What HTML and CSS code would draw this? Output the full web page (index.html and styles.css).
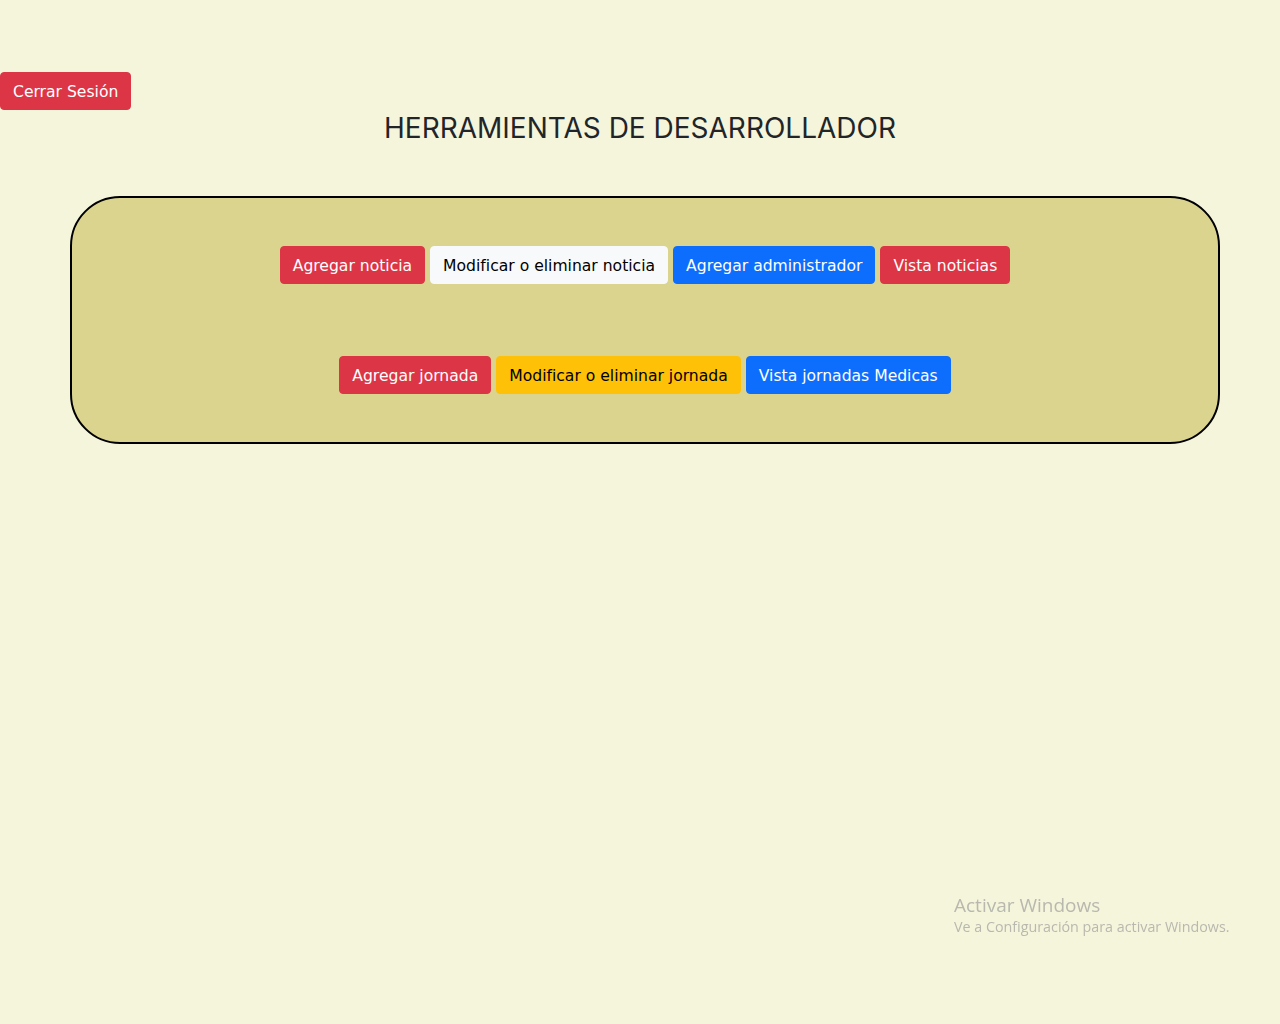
FILE: index.html
```html
<!DOCTYPE html>
<html lang="es">
<head>
<meta charset="utf-8">
<title>Herramientas de desarrollador</title>
<link rel="stylesheet" href="styles.css">
</head>
<body>
<header class="top">
  <button class="btn btn-danger">Cerrar Sesión</button>
</header>
<h1 class="title">HERRAMIENTAS DE DESARROLLADOR</h1>
<section class="panel">
  <div class="row">
    <button class="btn btn-danger">Agregar noticia</button>
    <button class="btn btn-light">Modificar o eliminar noticia</button>
    <button class="btn btn-primary">Agregar administrador</button>
    <button class="btn btn-danger">Vista noticias</button>
  </div>
  <div class="row">
    <button class="btn btn-danger">Agregar jornada</button>
    <button class="btn btn-warning">Modificar o eliminar jornada</button>
    <button class="btn btn-primary">Vista jornadas Medicas</button>
  </div>
</section>
<div class="watermark">
  <div class="wm-title">Activar Windows</div>
  <div class="wm-sub">Ve a Configuración para activar Windows.</div>
</div>
</body>
</html>
```
FILE: styles.css
```css
* { box-sizing: border-box; }
html, body { margin: 0; padding: 0; }
body {
  background: #f5f5dc;
  font-family: "DejaVu Sans", sans-serif;
  color: #212529;
  min-height: 1024px;
}
.top {
  padding-top: 72px;
  height: 110px;
}
.btn {
  display: inline-block;
  font-family: "DejaVu Sans", sans-serif;
  font-size: 15.6px;
  line-height: 24px;
  padding: 7px 12px 5px;
  border: 1px solid transparent;
  border-radius: 4px;
  cursor: pointer;
  margin: 0;
  vertical-align: middle;
}
.btn-danger { background: #dc3545; color: #fff; border-color: #dc3545; }
.btn-primary { background: #0d6efd; color: #fff; border-color: #0d6efd; }
.btn-warning { background: #ffc107; color: #000; border-color: #ffc107; }
.btn-light { background: #f8f9fa; color: #000; border-color: #f8f9fa; }
.title {
  margin: 0;
  text-align: center;
  font-family: "Inter", sans-serif;
  font-weight: 400;
  font-size: 28px;
  line-height: 36px;
  color: #212529;
  height: 86px;
}
.panel {
  margin: 0 60px 0 70px;
  width: 1150px;
  height: 248px;
  background: #dad48f;
  border: 2px solid #000;
  border-radius: 50px;
  padding-top: 48px;
  display: flex;
  flex-direction: column;
  gap: 72px;
}
.row {
  display: flex;
  justify-content: center;
  gap: 5px;
}
.watermark {
  position: fixed;
  left: 954px;
  top: 893px;
  font-family: "Open Sans", sans-serif;
  color: #b8b8ae;
}
.wm-title { font-size: 19px; line-height: 24px; }
.wm-sub { font-size: 14.3px; line-height: 20px; }
```
